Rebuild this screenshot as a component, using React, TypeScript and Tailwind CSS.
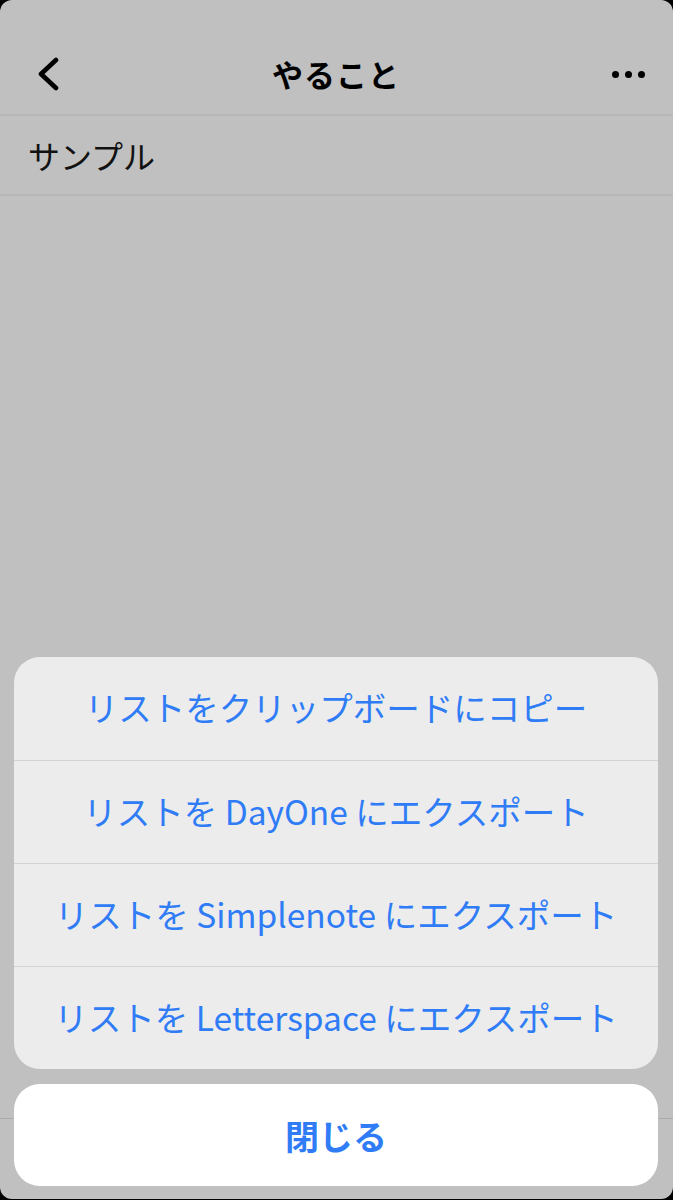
import React from "react";

const actions = [
    "リストをクリップボードにコピー",
    "リストを DayOne にエクスポート",
    "リストを Simplenote にエクスポート",
    "リストを Letterspace にエクスポート",
];

export default function App() {
    return (
        <div
            className="w-[673px] h-[1200px] bg-black"
            style={{ fontFamily: '"Noto Sans CJK JP", "Noto Sans", sans-serif' }}
        >
            <div className="relative w-full h-[1199px] bg-[#c0c0c0] rounded-[12px] overflow-hidden flex flex-col">
                {/* Nav bar */}
                <div className="h-[116px] pt-[34px] flex items-center justify-between pl-[34px] pr-[28px] border-b-2 border-[#b7b7b7]">
                    <svg width="28" height="34" viewBox="0 0 28 34" fill="none">
                        <path d="M22 3 L7 17 L22 31" stroke="#000" strokeWidth="4.6" strokeLinecap="round" strokeLinejoin="round" />
                    </svg>
                    <h1 className="text-[31px] font-bold text-black tracking-[1px] pr-[2px]">やること</h1>
                    <div className="flex gap-[6px] items-center">
                        <span className="w-[7px] h-[7px] rounded-full bg-black" />
                        <span className="w-[7px] h-[7px] rounded-full bg-black" />
                        <span className="w-[7px] h-[7px] rounded-full bg-black" />
                    </div>
                </div>

                {/* List row */}
                <div className="h-[80px] flex items-center px-[28px] border-b-2 border-[#b7b7b7]">
                    <span className="text-[32px] text-[#111]">サンプル</span>
                </div>

                <div className="flex-1" />

                {/* Underlying toolbar */}
                <div className="h-[81px] border-t border-[#aaaaaa]" />

                {/* Action sheet */}
                <div className="absolute left-[14px] right-[15px] top-[657px] flex flex-col">
                    <div className="bg-[#ececec] rounded-[26px] overflow-hidden">
                        {actions.map((a, i) => (
                            <div
                                key={a}
                                className={`h-[103px] pb-[2px] flex items-center justify-center text-[33.5px] text-[#2f7cf6] ${
                                    i > 0 ? "border-t border-[#d2d2d2]" : ""
                                }`}
                            >
                                {a}
                            </div>
                        ))}
                    </div>
                    <div className="mt-[15px] h-[102px] bg-white rounded-[26px] flex items-center justify-center text-[34px] font-bold text-[#2f7cf6]">
                        閉じる
                    </div>
                </div>
            </div>
        </div>
    );
}
